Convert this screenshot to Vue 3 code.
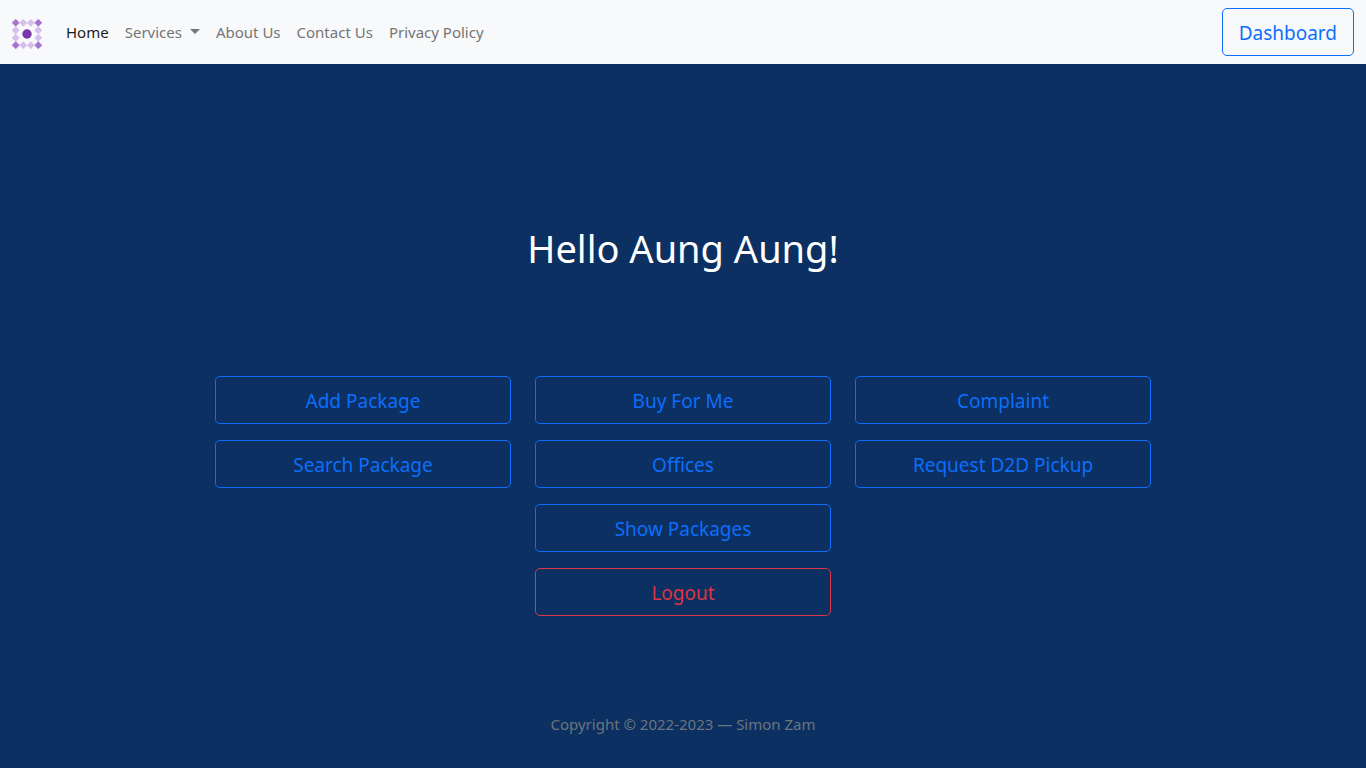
<script setup>
import { ref } from 'vue'

const servicesOpen = ref(false)
const columns = [
  [{ label: 'Add Package' }, { label: 'Search Package' }],
  [{ label: 'Buy For Me' }, { label: 'Offices' }, { label: 'Show Packages' }, { label: 'Logout', danger: true }],
  [{ label: 'Complaint' }, { label: 'Request D2D Pickup' }],
]

const centres = [3.75, 11.25, 18.75, 26.25]
const beads = []
centres.forEach((y, row) => {
  centres.forEach((x, col) => {
    const edgeRow = row === 0 || row === 3
    const edgeCol = col === 0 || col === 3
    if (edgeRow || edgeCol) beads.push({ x, y, corner: edgeRow && edgeCol })
  })
})
const diamond = ({ x, y }) => `M${x} ${y - 3.9}L${x + 3.9} ${y}L${x} ${y + 3.9}L${x - 3.9} ${y}Z`
</script>

<template>
  <div class="page">
    <nav class="navbar">
      <a class="brand" href="#" aria-label="Home page">
        <svg width="30" height="30" viewBox="0 0 30 30" aria-hidden="true">
          <path v-for="(b, i) in beads" :key="i" :d="diamond(b)" :fill="b.corner ? '#a874d1' : '#d6bfea'" />
          <circle cx="15" cy="15" r="4.7" fill="#7a37aa" />
        </svg>
      </a>
      <div class="links">
        <a class="link active" href="#">Home</a>
        <button class="link toggle" type="button" :aria-expanded="servicesOpen" @click="servicesOpen = !servicesOpen">Services</button>
        <a class="link" href="#">About Us</a>
        <a class="link" href="#">Contact Us</a>
        <a class="link" href="#">Privacy Policy</a>
      </div>
      <button class="btn" type="button">Dashboard</button>
    </nav>
    <main class="main">
      <h1>Hello Aung Aung!</h1>
      <div class="grid">
        <div v-for="(column, i) in columns" :key="i" class="column">
          <button v-for="item in column" :key="item.label" type="button" class="btn" :class="{ danger: item.danger }">{{ item.label }}</button>
        </div>
      </div>
    </main>
    <footer>Copyright © 2022-2023 — Simon Zam</footer>
  </div>
</template>

<style>
body {
  margin: 0;
  background: #0b3061;
}
</style>

<style scoped>
.page {
  display: flex;
  flex-direction: column;
  min-height: 100vh;
  font: 15px/24px "Noto Sans", sans-serif;
}
.page, .page * {
  box-sizing: border-box;
}
.navbar {
  display: flex;
  align-items: center;
  padding: 8px 12px;
  background: #f8f9fa;
}
.brand {
  display: flex;
  margin-right: 16px;
  padding-top: 4px;
}
.links {
  display: flex;
  flex: 1;
}
.link {
  padding: 8px;
  border: 0;
  background: none;
  color: #747576;
  font: inherit;
  text-decoration: none;
  white-space: nowrap;
  cursor: pointer;
}
.link.active {
  color: #1a1b1b;
}
.toggle::after {
  content: "";
  display: inline-block;
  margin-left: 8px;
  vertical-align: 4px;
  border-top: 5px solid;
  border-right: 5px solid transparent;
  border-left: 5px solid transparent;
}
.btn {
  padding: 9px 16px 7px;
  border: 1px solid #0d6efd;
  border-radius: 5px;
  background: transparent;
  color: #0d6efd;
  font: inherit;
  font-size: 19px;
  line-height: 30px;
  cursor: pointer;
}
.btn.danger {
  border-color: #dc3545;
  color: #dc3545;
}
.main {
  display: flex;
  flex: 1;
  flex-direction: column;
  align-items: center;
  justify-content: center;
  padding: 80px 12px 0;
}
h1 {
  margin: 0 0 104px;
  color: #fff;
  font-size: 38px;
  font-weight: 400;
  line-height: 48px;
}
.grid {
  display: grid;
  grid-template-columns: repeat(3, 1fr);
  gap: 24px;
  width: 100%;
  max-width: 936px;
}
.column {
  display: flex;
  flex-direction: column;
  gap: 16px;
}
footer {
  padding: 16px 12px 32px;
  color: #6c757d;
  text-align: center;
}
</style>
